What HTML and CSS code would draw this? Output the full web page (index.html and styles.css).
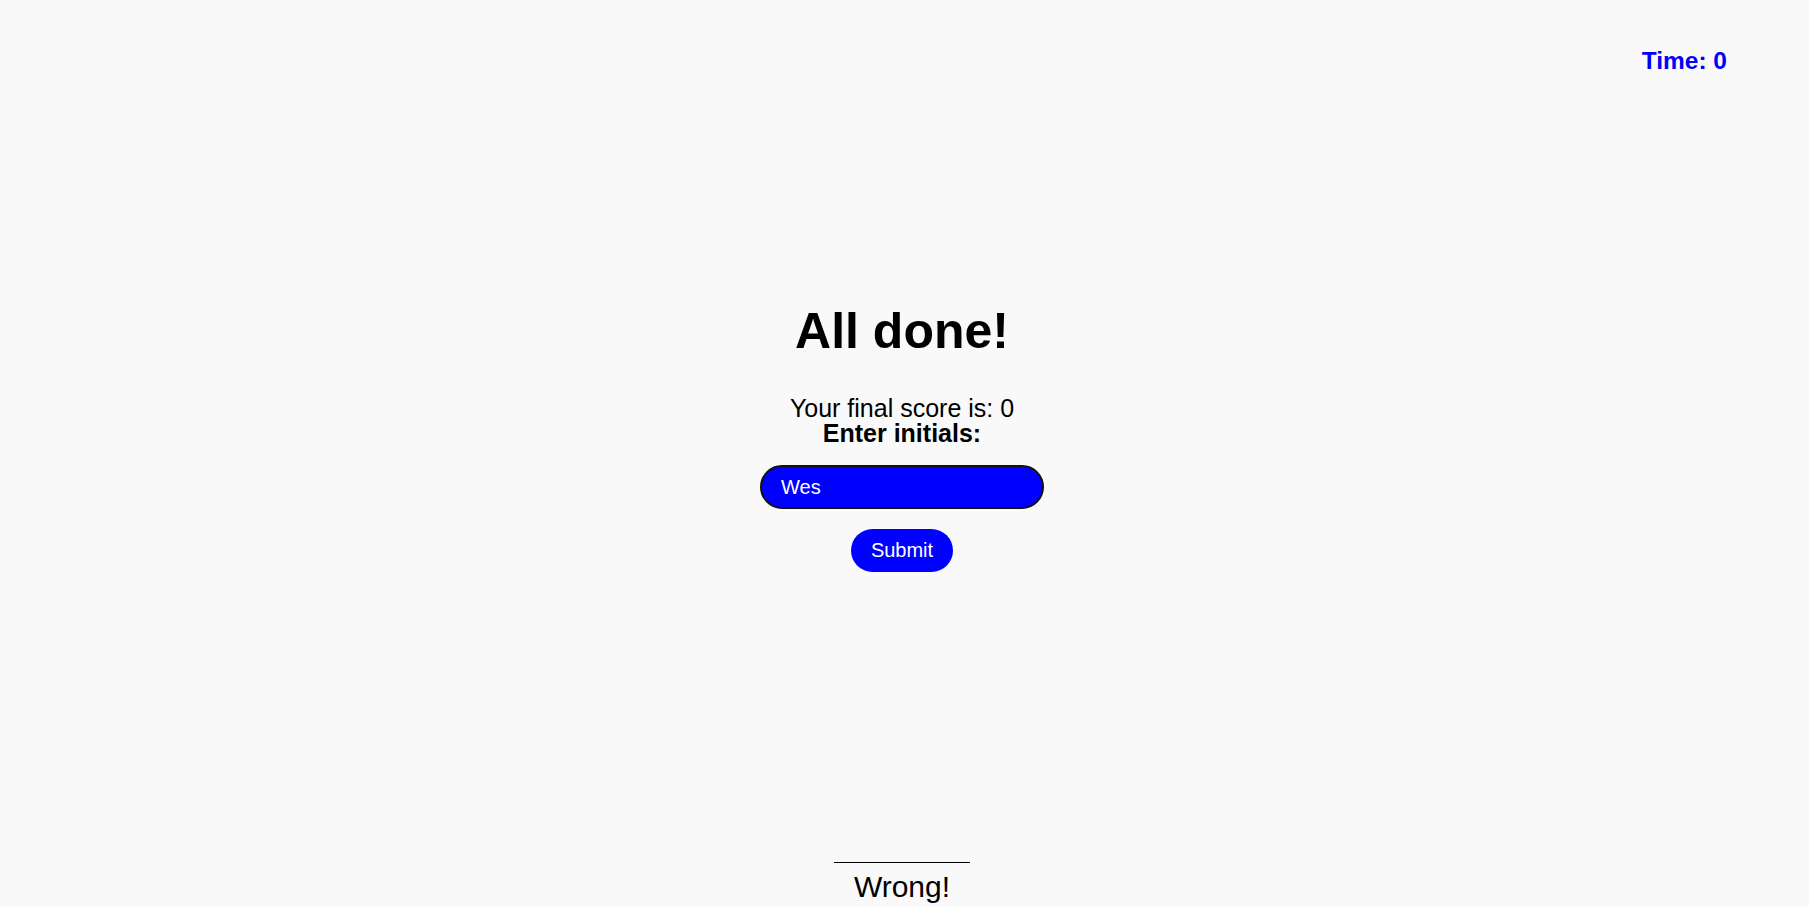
FILE: index.html
```html
<!DOCTYPE html>
<html lang="en">
<head>
<meta charset="utf-8">
<title>Quiz</title>
<link rel="stylesheet" href="styles.css">
</head>
<body>
<header class="topbar">
  <div class="timer">Time: 0</div>
</header>
<main class="content">
  <section class="done">
    <h1 class="title">All done!</h1>
    <p class="score">Your final score is: 0<br><span class="label">Enter initials:</span></p>
    <input class="initials" type="text" value="Wes">
    <button class="submit" type="button">Submit</button>
  </section>
  <div class="feedback">Wrong!</div>
</main>
</body>
</html>
```
FILE: styles.css
```css
html, body {
  margin: 0;
  padding: 0;
}
body {
  background: #f9f9f9;
  font-family: "Liberation Sans", Arial, sans-serif;
  color: #000;
  overflow: hidden;
  height: 907px;
}
.topbar {
  display: flex;
  justify-content: flex-end;
  padding: 47px 82px 0 0;
}
.timer {
  color: #0000ff;
  font-weight: bold;
  font-size: 24.5px;
  line-height: 27px;
}
.content {
  display: flex;
  flex-direction: column;
  align-items: center;
  padding-right: 5px;
}
.done {
  display: flex;
  flex-direction: column;
  align-items: center;
}
.title {
  margin: 229px 0 0 0;
  font-size: 50px;
  line-height: 56px;
  font-weight: bold;
}
.score {
  margin: 37px 0 0 0;
  font-size: 25px;
  line-height: 24.5px;
  text-align: center;
}
.label {
  font-weight: bold;
}
.initials {
  box-sizing: border-box;
  margin-top: 20px;
  width: 284px;
  height: 44px;
  border: 2px solid #111;
  border-radius: 22px;
  background: #0000ff;
  color: #fff;
  font-family: "Liberation Sans", Arial, sans-serif;
  font-size: 20px;
  padding: 0 18px 0 19px;
  outline: none;
}
.submit {
  margin-top: 20px;
  padding: 10px 20px;
  border: none;
  border-radius: 22px;
  background: #0000ff;
  color: #fff;
  font-family: "Liberation Sans", Arial, sans-serif;
  font-size: 20px;
  line-height: 23px;
}
.feedback {
  margin-top: 290px;
  width: 136px;
  border-top: 1px solid #000;
  padding-top: 7px;
  text-align: center;
  font-size: 30px;
}
```
